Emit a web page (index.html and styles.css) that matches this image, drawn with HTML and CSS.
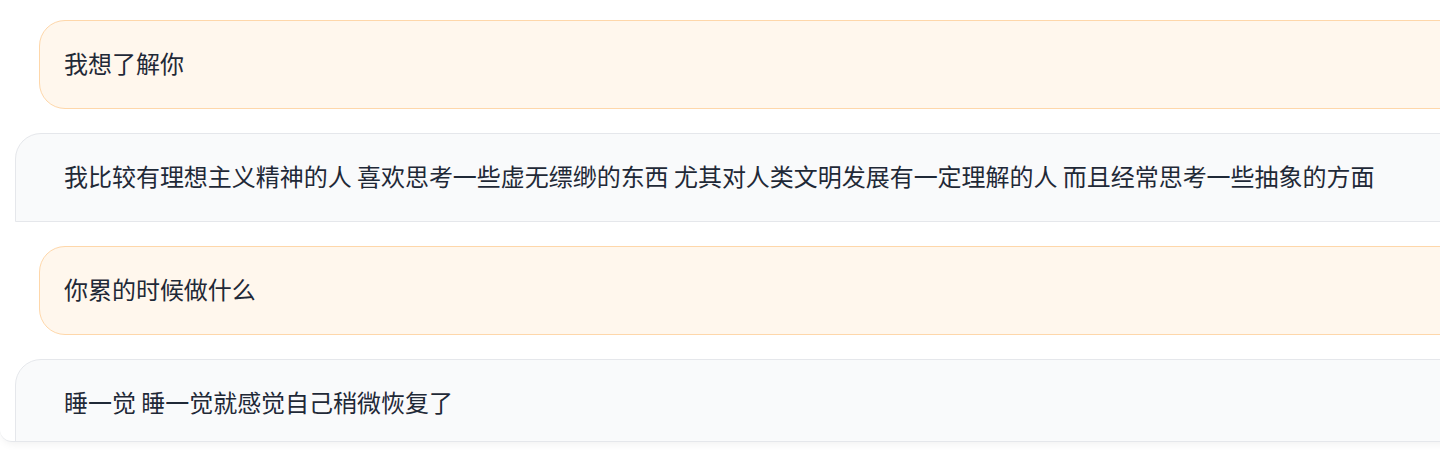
FILE: index.html
```html
<!DOCTYPE html>
<html lang="zh">
<head>
<meta charset="utf-8">
<link rel="stylesheet" href="styles.css">
</head>
<body>
  <div class="chat">
    <div class="msg msg-user">我想了解你</div>
    <div class="msg msg-bot">我比较有理想主义精神的人 喜欢思考一些虚无缥缈的东西 尤其对人类文明发展有一定理解的人 而且经常思考一些抽象的方面</div>
    <div class="msg msg-user">你累的时候做什么</div>
    <div class="msg msg-bot">睡一觉 睡一觉就感觉自己稍微恢复了</div>
  </div>
</body>
</html>
```
FILE: styles.css
```css
html, body {
  margin: 0;
  padding: 0;
  background: #ffffff;
  overflow: hidden;
}
body {
  width: 1440px;
  height: 456px;
  font-family: "Noto Sans CJK SC", "Noto Sans", sans-serif;
  color: #1f2937;
}
.chat {
  box-sizing: border-box;
  width: 1500px;
  height: 442px;
  overflow: hidden;
  display: flex;
  flex-direction: column;
  gap: 24px;
  padding-top: 20px;
  border-bottom: 1px solid #e5e7eb;
  border-bottom-left-radius: 12px;
  box-shadow: 0 4px 8px -2px rgba(0, 0, 0, 0.06);
}
.msg {
  flex: none;
  box-sizing: border-box;
  height: 89px;
  display: flex;
  align-items: center;
  padding-bottom: 5px;
  font-size: 24px;
  line-height: 39px;
  letter-spacing: -0.03px;
  white-space: nowrap;
}
.msg-user {
  margin-left: 39px;
  padding-left: 24px;
  background: #fff7ed;
  border: 1px solid #fed7aa;
  border-radius: 26px;
}
.msg-bot {
  margin-left: 15px;
  padding-left: 48px;
  background: #f9fafb;
  border: 1px solid #e5e7eb;
  border-radius: 26px 26px 26px 0;
}
```
